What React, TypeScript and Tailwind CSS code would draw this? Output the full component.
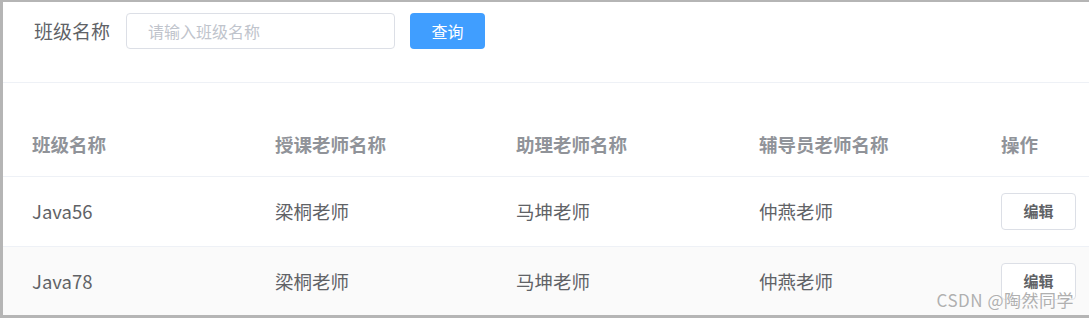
import * as React from "react";

interface IRow {
  className: string;
  teacher: string;
  assistant: string;
  counselor: string;
}

const rows: IRow[] = [
  { className: "Java56", teacher: "梁桐老师", assistant: "马坤老师", counselor: "仲燕老师" },
  { className: "Java78", teacher: "梁桐老师", assistant: "马坤老师", counselor: "仲燕老师" },
];

const cols = "grid grid-cols-[243px_241px_243px_242px_1fr] items-center pl-[29px]";

const App: React.FC = () => {
  const [keyword, setKeyword] = React.useState<string>("");

  return (
    <div
      className="relative w-[1089px] h-[318px] overflow-hidden bg-white border-l-[3px] border-t-2 border-b-[3px] border-[#b5b5b5]"
      style={{ fontFamily: '"Noto Sans CJK SC", "Noto Sans", sans-serif' }}
    >
      <div className="h-[81px] border-b border-[#eef1f6] pt-[11px]">
        <div className="flex items-center h-[36px] pl-[31px]">
          <span className="text-[19px] text-[#606266] mr-[16px]">班级名称</span>
          <input
            className="w-[269px] h-[36px] rounded-[4px] border border-[#dcdfe6] px-[21px] text-[16px] text-[#606266] placeholder:text-[#c0c4cc] outline-none"
            placeholder="请输入班级名称"
            value={keyword}
            onChange={(e) => setKeyword(e.target.value)}
          />
          <button className="ml-[15px] w-[75px] h-[36px] rounded-[4px] bg-[#409eff] text-white text-[16px]">
            查询
          </button>
        </div>
      </div>

      <div className="pt-[30px]">
        <div className={`${cols} h-[64px] border-b border-[#eef1f6] text-[18.5px] font-semibold text-[#909399]`}>
          <span>班级名称</span>
          <span>授课老师名称</span>
          <span>助理老师名称</span>
          <span>辅导员老师名称</span>
          <span>操作</span>
        </div>
        {rows.map((r, i) => (
          <div
            key={r.className}
            className={`${cols} h-[70px] border-b border-[#eef1f6] text-[18.5px] text-[#606266] ${
              i % 2 === 1 ? "bg-[#fafafa]" : "bg-white"
            }`}
          >
            <span>{r.className}</span>
            <span>{r.teacher}</span>
            <span>{r.assistant}</span>
            <span>{r.counselor}</span>
            <span>
              <button className="w-[75px] h-[37px] rounded-[4px] border border-[#dcdfe6] bg-white text-[15px] font-semibold text-[#606266]">
                编辑
              </button>
            </span>
          </div>
        ))}
      </div>

      <div
        className="absolute right-[15px] bottom-[3px] text-[17px] tracking-[0.5px] text-[#b0b0b0]"
        style={{ textShadow: "0 0 2px #fff" }}
      >
        CSDN @陶然同学
      </div>
    </div>
  );
};

export default App;
